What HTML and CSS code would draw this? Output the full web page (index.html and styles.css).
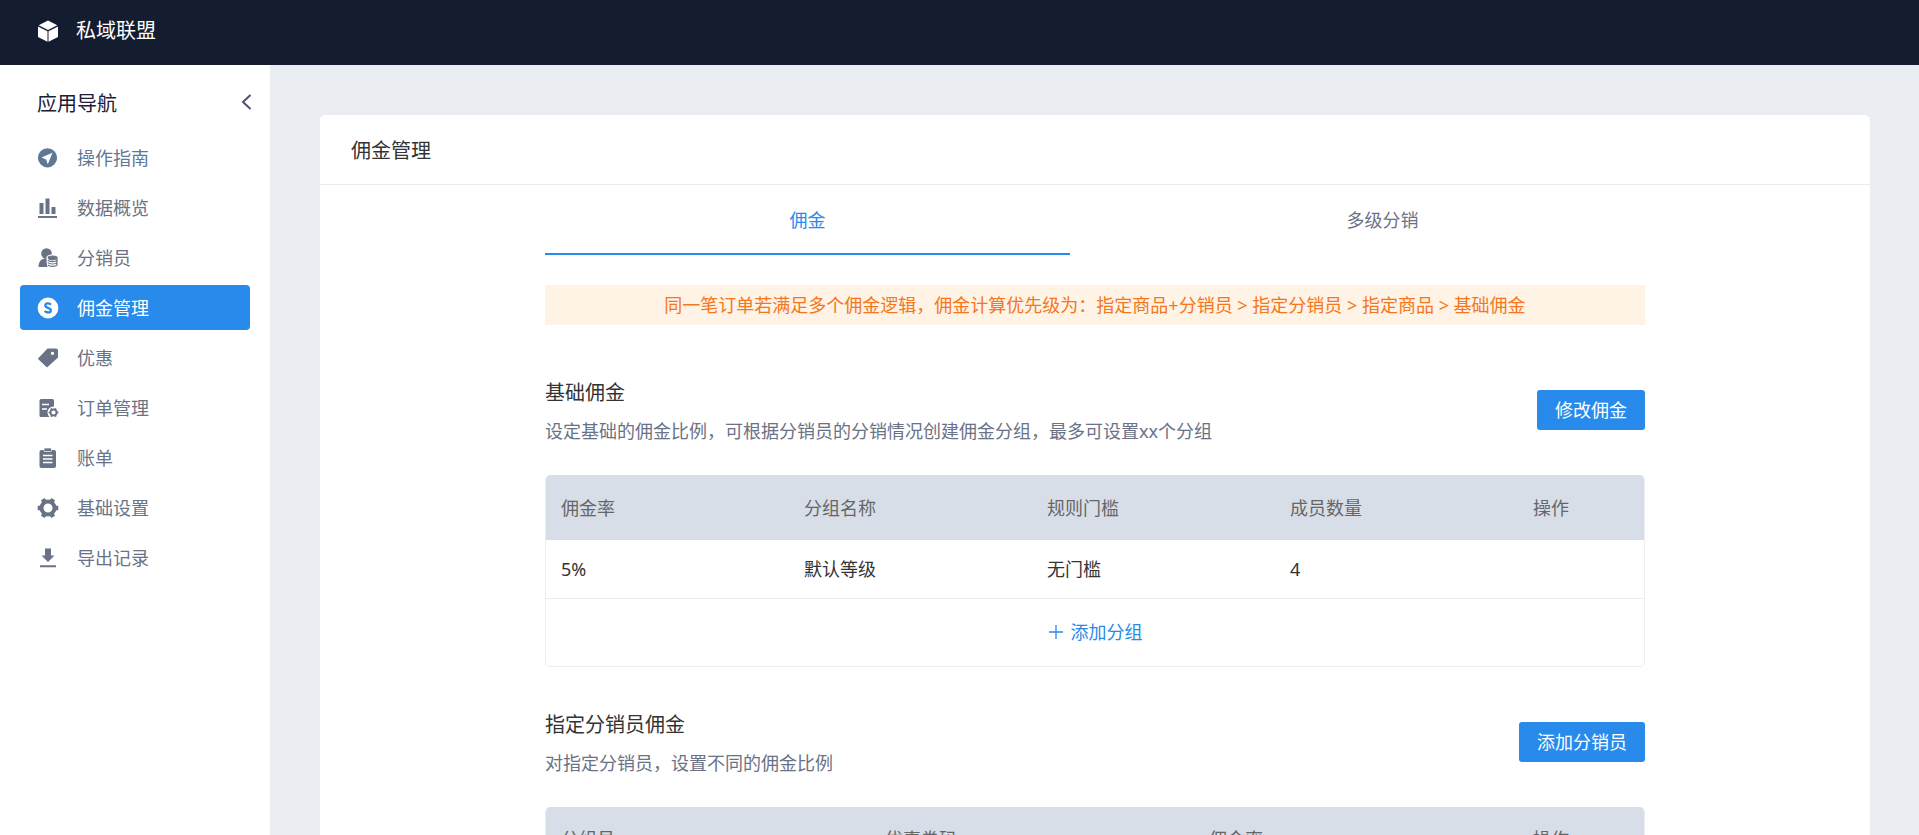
FILE: index.html
```html
<!DOCTYPE html>
<html lang="zh-CN">
<head>
<meta charset="utf-8">
<title>私域联盟</title>
<link rel="stylesheet" href="styles.css">
</head>
<body>
<header class="topbar">
  <svg class="icon logo" viewBox="0 0 22 22"><path fill="#fff" d="M11 .5 20.300 5.200 11 10 1.700 5.200zM1 6.500 10.500 11.300V21.800L1 17zM21 6.500 11.500 11.300V21.800L21 17z"/></svg>
  <span class="brand">私域联盟</span>
</header>
<div class="layout">
  <nav class="sidebar" aria-label="应用导航">
    <div class="sidebar-head">
      <h2 class="sidebar-title">应用导航</h2>
      <button class="collapse" type="button" aria-label="收起"><svg viewBox="0 0 12 18"><path d="M10.500 2 3 9l7.500 7" fill="none" stroke="currentColor" stroke-width="2"/></svg></button>
    </div>
    <ul class="menu">
      <li><a class="item guide" href="#"><svg class="icon" viewBox="0 0 22 22"><path fill="currentColor" fill-rule="evenodd" d="M10.500 1.200a9.600 9.600 0 1 1 0 19.200 9.600 9.600 0 0 1 0-19.200zM15.500 5.800 4.500 10.500l4.600 1.900 1.700 4.800z"/></svg>操作指南</a></li>
      <li><a class="item" href="#"><svg class="icon" viewBox="0 0 22 22"><path fill="currentColor" d="M2.500 6h4v11h-4zM8.500 1.500h4V17h-4zM14.500 10h4v7h-4zM1 19h19v2H1z"/></svg>数据概览</a></li>
      <li><a class="item" href="#"><svg class="icon" viewBox="0 0 22 22"><g fill="currentColor"><circle cx="9.500" cy="6.500" r="5.300"/><path d="M1.500 20c0-5 2-7.500 6-8.500h4V20z"/></g><path fill="#fff" d="M9.500 10.500c0-4 11.500-4 11.500 0V22H11c-1-2-1.500-6-1.500-11.500z"/><g fill="none" stroke="currentColor" stroke-width="1.200"><ellipse cx="15.500" cy="10.800" rx="4.300" ry="1.800" fill="currentColor"/><path d="M10.800 13.200c1.500 2 8 2 9.400 0M10.800 15.500c1.500 2 8 2 9.400 0M10.800 17.800c1.500 2 8 2 9.400 0M20 10.500v8"/></g></svg>分销员</a></li>
      <li><a class="item active" href="#" aria-current="page"><svg class="icon" viewBox="0 0 22 22"><circle cx="11" cy="11" r="10.400" fill="#fff"/><path d="M14 7.600C12.500 6 8.300 5.900 8.300 8.500c0 2.800 5.500 1.900 5.500 4.900 0 2.800-4.600 2.500-6.100.7" fill="none" stroke="#288aeb" stroke-width="2.300"/></svg>佣金管理</a></li>
      <li><a class="item" href="#"><svg class="icon" viewBox="0 0 22 22"><path fill="currentColor" fill-rule="evenodd" d="M10.500 1.500H19a2 2 0 0 1 2 2V10.500L10 20.500.800 11.800zM15.500 4.800a1.600 1.600 0 1 0 .01 0z"/></svg>优惠</a></li>
      <li><a class="item" href="#"><svg class="icon" viewBox="0 0 22 22"><rect x="2.500" y="2" width="14.500" height="18" rx="1.500" fill="currentColor"/><path stroke="#fff" stroke-width="1.500" d="M5 7.500h7M5 12h5"/><circle cx="16.500" cy="15.500" r="6" fill="#fff"/><circle cx="16.500" cy="15.500" r="3" fill="none" stroke="currentColor" stroke-width="1.800"/><path stroke="currentColor" stroke-width="1.800" d="M11.700 15.500h2M19.300 15.500h2M14.100 11.350l1 1.700M17.900 17.950l1 1.700M14.100 19.650l1-1.700M17.900 13.050l1-1.700"/></svg>订单管理</a></li>
      <li><a class="item" href="#"><svg class="icon" viewBox="0 0 22 22"><rect x="2.500" y="3" width="16.500" height="18" rx="2" fill="currentColor"/><rect x="7" y="1" width="7.500" height="3.500" rx="1" fill="currentColor" stroke="#fff" stroke-width=".7"/><path stroke="#fff" stroke-width="1.300" d="M6 8.500h9.500M6 12h9.500M6 15.500h9.500"/></svg>账单</a></li>
      <li><a class="item" href="#"><svg class="icon" viewBox="0 0 22 22"><circle cx="11" cy="11" r="6.500" fill="none" stroke="currentColor" stroke-width="4"/><path stroke="currentColor" stroke-width="4.500" d="M.700 11h3M18.300 11h3M5.850 2.100l1.500 2.600M14.650 17.300l1.500 2.600M5.850 19.900l1.500-2.600M14.650 4.700l1.500-2.600"/></svg>基础设置</a></li>
      <li><a class="item" href="#"><svg class="icon" viewBox="0 0 22 22"><path fill="currentColor" d="M8 1.500h6v7h3.500L11 15 4.500 8.500H8zM3 18.300h16v2H3z"/></svg>导出记录</a></li>
    </ul>
  </nav>
  <main class="main">
    <div class="card">
      <h1 class="card-title">佣金管理</h1>
      <div class="content">
        <div class="tabs" role="tablist">
          <button class="tab selected" type="button" role="tab" aria-selected="true">佣金</button>
          <button class="tab" type="button" role="tab" aria-selected="false">多级分销</button>
        </div>
        <p class="notice">同一笔订单若满足多个佣金逻辑，佣金计算优先级为：指定商品+分销员 &gt; 指定分销员 &gt; 指定商品 &gt; 基础佣金</p>
        <section class="section">
          <div class="section-head">
            <div>
              <h2 class="section-title">基础佣金</h2>
              <p class="desc">设定基础的佣金比例，可根据分销员的分销情况创建佣金分组，最多可设置xx个分组</p>
            </div>
            <button class="btn" type="button">修改佣金</button>
          </div>
          <div class="table-box">
            <table class="table">
              <thead><tr><th>佣金率</th><th>分组名称</th><th>规则门槛</th><th>成员数量</th><th class="ops">操作</th></tr></thead>
              <tbody><tr><td>5%</td><td>默认等级</td><td>无门槛</td><td>4</td><td></td></tr></tbody>
            </table>
            <button class="add" type="button"><svg class="plus" viewBox="0 0 16 16"><path d="M8 1v14M1 8h14" stroke="currentColor" stroke-width="1.300"/></svg>添加分组</button>
          </div>
        </section>
        <section class="section">
          <div class="section-head">
            <div>
              <h2 class="section-title">指定分销员佣金</h2>
              <p class="desc">对指定分销员，设置不同的佣金比例</p>
            </div>
            <button class="btn" type="button">添加分销员</button>
          </div>
          <div class="table-box">
            <table class="table">
              <thead><tr><th>分组员</th><th>优惠券码</th><th>佣金率</th><th class="ops">操作</th></tr></thead>
            </table>
          </div>
        </section>
      </div>
    </div>
  </main>
</div>
</body>
</html>
```

FILE: styles.css
```css
* { box-sizing: border-box; }
html, body { height: 100%; }
body {
  margin: 0;
  display: flex;
  flex-direction: column;
  overflow: hidden;
  background: #eaedf2;
  color: #333;
  font: 400 18px/24px "Noto Sans", "Noto Sans CJK SC", sans-serif;
}
h1, h2, p, ul { margin: 0; padding: 0; font-weight: inherit; }
button { font: inherit; border: 0; background: none; padding: 0; cursor: pointer; }
svg { display: block; flex: none; }
.icon { width: 22px; height: 22px; }

.topbar {
  flex: none;
  display: flex;
  align-items: center;
  gap: 17px;
  height: 65px;
  padding: 0 37px 3px;
  background: #141c30;
  color: #fff;
}
.brand { font-size: 20px; }

.layout { flex: 1; display: flex; min-height: 0; }
.sidebar { flex: none; width: 270px; padding: 20px; background: #fff; }
.sidebar-head {
  display: flex;
  align-items: center;
  justify-content: space-between;
  height: 38px;
  padding-left: 17px;
  margin: 0 -2px 12px 0;
}
.sidebar-title { font-size: 20px; color: #1b2033; }
.collapse { color: #4f5273; padding-bottom: 5px; }
.collapse svg { width: 12px; height: 18px; }
.menu { list-style: none; display: grid; gap: 5px; }
.item {
  display: flex;
  align-items: center;
  gap: 18px;
  height: 45px;
  padding-left: 17px;
  border-radius: 4px;
  color: #6a7286;
  text-decoration: none;
}
.guide { color: #5f7896; }
.active { background: #288aeb; color: #fff; }

.main { flex: 1; min-width: 0; padding: 50px 49px 0 50px; overflow: hidden; }
.card { min-height: 100%; background: #fff; border-radius: 5px; }
.card-title {
  height: 70px;
  padding: 1px 31px 0;
  border-bottom: 1px solid #ebebeb;
  font-size: 20px;
  line-height: 70px;
}
.content { max-width: 1100px; margin: 0 auto; }
.tabs { display: grid; grid-template-columns: 1fr 1fr; gap: 50px; }
.tab {
  height: 70px;
  padding-top: 2px;
  border-bottom: 2px solid transparent;
  color: #6a7286;
}
.selected { color: #288aeb; border-color: #288aeb; }
.notice {
  margin-top: 30px;
  padding: 8px;
  background: #fef3e5;
  color: #f57620;
  text-align: center;
}
.section { margin-top: 50px; }
.section-head {
  display: flex;
  align-items: center;
  justify-content: space-between;
  height: 70px;
  margin-bottom: 30px;
}
.section + .section { margin-top: 40px; }
.section-title { padding-top: 4px; font-size: 20px; line-height: 32px; }
.desc { padding-top: 6px; line-height: 32px; color: #6a7286; }
.btn {
  height: 40px;
  padding: 0 18px;
  border-radius: 3px;
  background: #288aeb;
  color: #fff;
}
.table-box { border: 1px solid #ebedf2; border-top: 0; border-radius: 5px; overflow: hidden; }
.table { width: 100%; table-layout: fixed; border-collapse: collapse; }
.table th, .table td { padding: 0 15px; text-align: left; font-weight: inherit; }
.table th { height: 65px; background: #d8dee8; color: #666; }
.table td { height: 58px; border-bottom: 1px solid #ebedf2; }
.table .ops { width: 126px; }
.add {
  display: flex;
  align-items: center;
  justify-content: center;
  gap: 7px;
  width: 100%;
  height: 67px;
  color: #288aeb;
}
.plus { width: 16px; height: 16px; }
```
